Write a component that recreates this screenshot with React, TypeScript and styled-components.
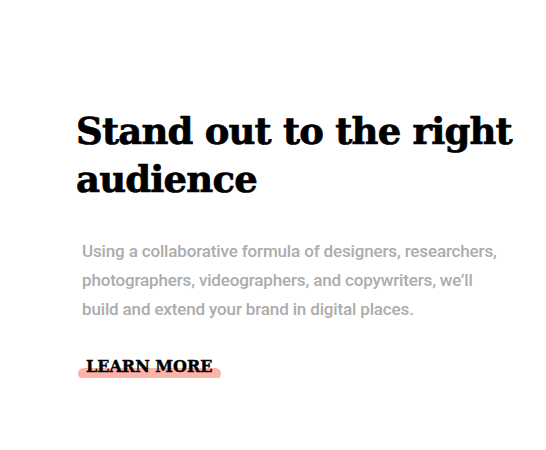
import React from "react";
import styled, { createGlobalStyle } from "styled-components";

const Global = createGlobalStyle`
  html, body { margin: 0; padding: 0; background: #ffffff; }
  body { font-family: "Liberation Sans", Arial, sans-serif; }
`;

const Section = styled.section`
  display: flex;
  flex-direction: column;
  align-items: flex-start;
  padding: 107px 0 0 76px;
`;

const Heading = styled.h1`
  margin: 0;
  font-family: "DejaVu Serif", "Liberation Serif", serif;
  font-weight: 700;
  font-size: 37px;
  line-height: 48px;
  letter-spacing: -0.8px;
  color: #000000;
  max-width: 450px;
  -webkit-text-stroke: 0.7px #000000;
`;

const Lead = styled.p`
  margin: 34px 0 0 6px;
  font-family: Roboto, "Liberation Sans", sans-serif;
  font-weight: 500;
  font-size: 17px;
  line-height: 29px;
  letter-spacing: -0.15px;
  color: #acacac;
  max-width: 430px;
`;

const MoreLink = styled.a`
  position: relative;
  margin: 32px 0 0 2px;
  padding: 0 8px;
  font-family: "DejaVu Serif", "Liberation Serif", serif;
  font-weight: 700;
  font-size: 16px;
  line-height: 22px;
  color: #000000;
  text-decoration: none;
  text-transform: uppercase;
  -webkit-text-stroke: 0.4px #000000;
  z-index: 0;

  &::after {
    content: "";
    position: absolute;
    left: 0;
    right: 0;
    bottom: -1px;
    height: 11px;
    border-radius: 6px;
    background: #fcb3aa;
    z-index: -1;
  }
`;

export default function App() {
  return (
    <>
      <Global />
      <Section>
        <Heading>Stand out to the right audience</Heading>
        <Lead>
          Using a collaborative formula of designers, researchers,
          photographers, videographers, and copywriters, we’ll build and
          extend your brand in digital places.
        </Lead>
        <MoreLink href="#">Learn more</MoreLink>
      </Section>
    </>
  );
}
